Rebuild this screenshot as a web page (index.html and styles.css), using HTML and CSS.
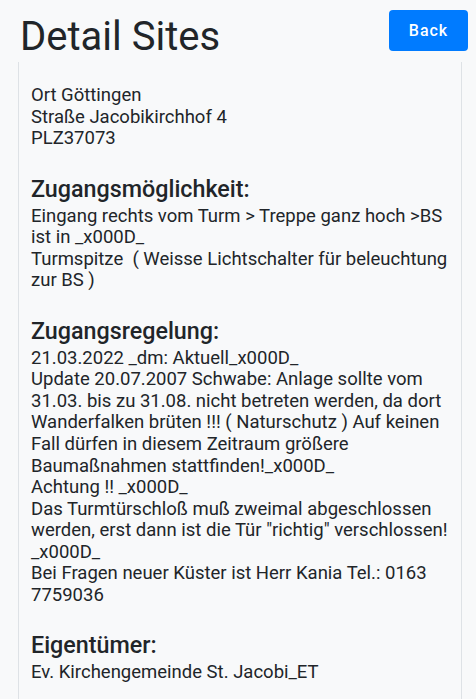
FILE: index.html
```html
<!DOCTYPE html>
<html lang="de">
<head>
<meta charset="utf-8">
<link rel="stylesheet" href="styles.css">
</head>
<body>
<header class="top">
  <h1 class="title">Detail Sites</h1>
  <button class="back">Back</button>
</header>
<main class="card">
  <p class="addr">Ort Göttingen<br>Straße Jacobikirchhof 4<br>PLZ37073</p>
  <section class="sec">
    <h2 class="label">Zugangsmöglichkeit:</h2>
    <p class="txt">Eingang rechts vom Turm &gt; Treppe ganz hoch &gt;BS ist in _x000D_<br>Turmspitze &nbsp;( Weisse Lichtschalter für beleuchtung zur BS )</p>
  </section>
  <section class="sec">
    <h2 class="label">Zugangsregelung:</h2>
    <p class="txt">21.03.2022 _dm: Aktuell_x000D_<br>Update 20.07.2007 Schwabe: Anlage sollte vom 31.03. bis zu 31.08. nicht betreten werden, da dort Wanderfalken brüten !!! ( Naturschutz ) Auf keinen Fall dürfen in diesem Zeitraum größere Baumaßnahmen stattfinden!_x000D_<br>Achtung !! _x000D_<br>Das Turmtürschloß muß zweimal abgeschlossen werden, erst dann ist die Tür "richtig" verschlossen! _x000D_<br>Bei Fragen neuer Küster ist Herr Kania Tel.: 0163 7759036</p>
  </section>
  <section class="sec">
    <h2 class="label">Eigentümer:</h2>
    <p class="txt">Ev. Kirchengemeinde St. Jacobi_ET</p>
  </section>
</main>
</body>
</html>
```

FILE: styles.css
```css
html, body {
  margin: 0;
  padding: 0;
  background: #f8f9fa;
  font-family: Roboto, "Noto Sans", sans-serif;
  color: #212529;
  overflow: hidden;
}
.top {
  height: 62px;
  display: flex;
  justify-content: space-between;
  align-items: flex-start;
  padding: 0 8px 0 20px;
  box-sizing: border-box;
}
.title {
  margin: 13px 0 0;
  font-size: 40px;
  font-weight: 400;
  line-height: 48px;
  color: #212529;
}
.back {
  margin-top: 10px;
  width: 79px;
  height: 41px;
  border: none;
  border-radius: 4px;
  background: #007bff;
  color: #fff;
  font-family: Roboto, sans-serif;
  font-size: 16px;
  font-weight: 500;
  letter-spacing: 1px;
}
.card {
  margin: 0 14px 0 18px;
  border-left: 1px solid #dee2e6;
  border-right: 1px solid #dee2e6;
  padding: 23px 12px 30px;
  min-height: 700px;
}
.addr, .txt {
  margin: 0;
  font-size: 18.5px;
  line-height: 21.55px;
}
.sec {
  margin-top: 26px;
}
.label {
  margin: 0 0 4px;
  font-size: 23.3px;
  font-weight: 500;
  line-height: 26px;
}
```
